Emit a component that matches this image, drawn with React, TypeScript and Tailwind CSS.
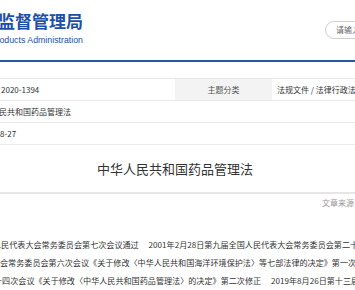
const cjk = "font-['Microsoft_YaHei','Noto_Sans_CJK_SC',sans-serif]";

const App = () => {
  return (
    <div className={`w-[355px] h-[290px] overflow-hidden bg-white text-[#333] ${cjk}`}>
      {/* header */}
      <div className="h-[60px] flex items-start">
        <div className="-ml-[90px] w-[173px] shrink-0 flex flex-col items-end pt-[11px] whitespace-nowrap">
          <p className="text-[17px] leading-[20px] font-bold text-[#1d4fa6]">国家药品监督管理局</p>
          <p className="text-[8.8px] leading-[10px] mt-[4px] text-[#1d4fa6] font-['Liberation_Sans',sans-serif]">
            National Medical Products Administration
          </p>
        </div>
        <div className="ml-auto -mr-[30px] mt-[21px] w-[60px] h-[18px] shrink-0 rounded-full border border-[#cfcfcf] flex items-center pl-[10px]">
          <span className="text-[8px] text-[#666]">请输入</span>
        </div>
      </div>
      <div className="h-[2px] bg-[#2557a7]" />

      {/* info table */}
      <div className="mt-[16px] -ml-[102px] w-[620px] text-[8px]">
        <div className="h-[22px] flex border-t border-[#e8e8e8]">
          <div className="w-[97px] bg-[#f3f3f3] flex items-center justify-center text-[#555]">索引号</div>
          <div className="w-[180px] pl-[6px] flex items-center">2020-1394</div>
          <div className="w-[97px] bg-[#f3f3f3] flex items-center justify-center text-[#555]">主题分类</div>
          <div className="flex-1 pl-[5px] flex items-center whitespace-nowrap">法规文件 / 法律行政法规</div>
        </div>
        <div className="h-[22px] flex border-t border-[#e8e8e8]">
          <div className="w-[71px] bg-[#f3f3f3] flex items-center justify-center text-[#555]">标题</div>
          <div className="flex-1 pl-[6px] flex items-center">中华人民共和国药品管理法</div>
        </div>
        <div className="h-[22px] flex border-t border-[#e8e8e8]">
          <div className="w-[71px] bg-[#f3f3f3] flex items-center justify-center text-[#555]">发布日期</div>
          <div className="flex-1 pl-[6px] flex items-center">2019-08-27</div>
        </div>
      </div>

      {/* title */}
      <div className="h-[50px] border-t border-[#ececec] border-b-2 border-b-[#e6e6e6] flex items-center justify-center pr-[5px]">
        <h1 className="text-[13px] text-[#333]">中华人民共和国药品管理法</h1>
      </div>
      <div className="flex justify-end -mr-[47px] mt-[3px] whitespace-nowrap">
        <span className="text-[8px] text-[#999]">文章来源：中国人大网</span>
      </div>

      {/* body */}
      <div className="mt-[27px] text-[8.1px] leading-[18px] text-[#333] whitespace-pre">
        <div className="-ml-[7px]">人民代表大会常务委员会第七次会议通过　 2001年2月28日第九届全国人民代表大会常务委员会第二十次会议修订</div>
        <div>会常务委员会第六次会议《关于修改〈中华人民共和国海洋环境保护法〉等七部法律的决定》第一次修正</div>
        <div className="-ml-[6px]">十四次会议《关于修改〈中华人民共和国药品管理法〉的决定》第二次修正　 2019年8月26日第十三届全国人民代表大会</div>
      </div>
    </div>
  );
};

export default App;
